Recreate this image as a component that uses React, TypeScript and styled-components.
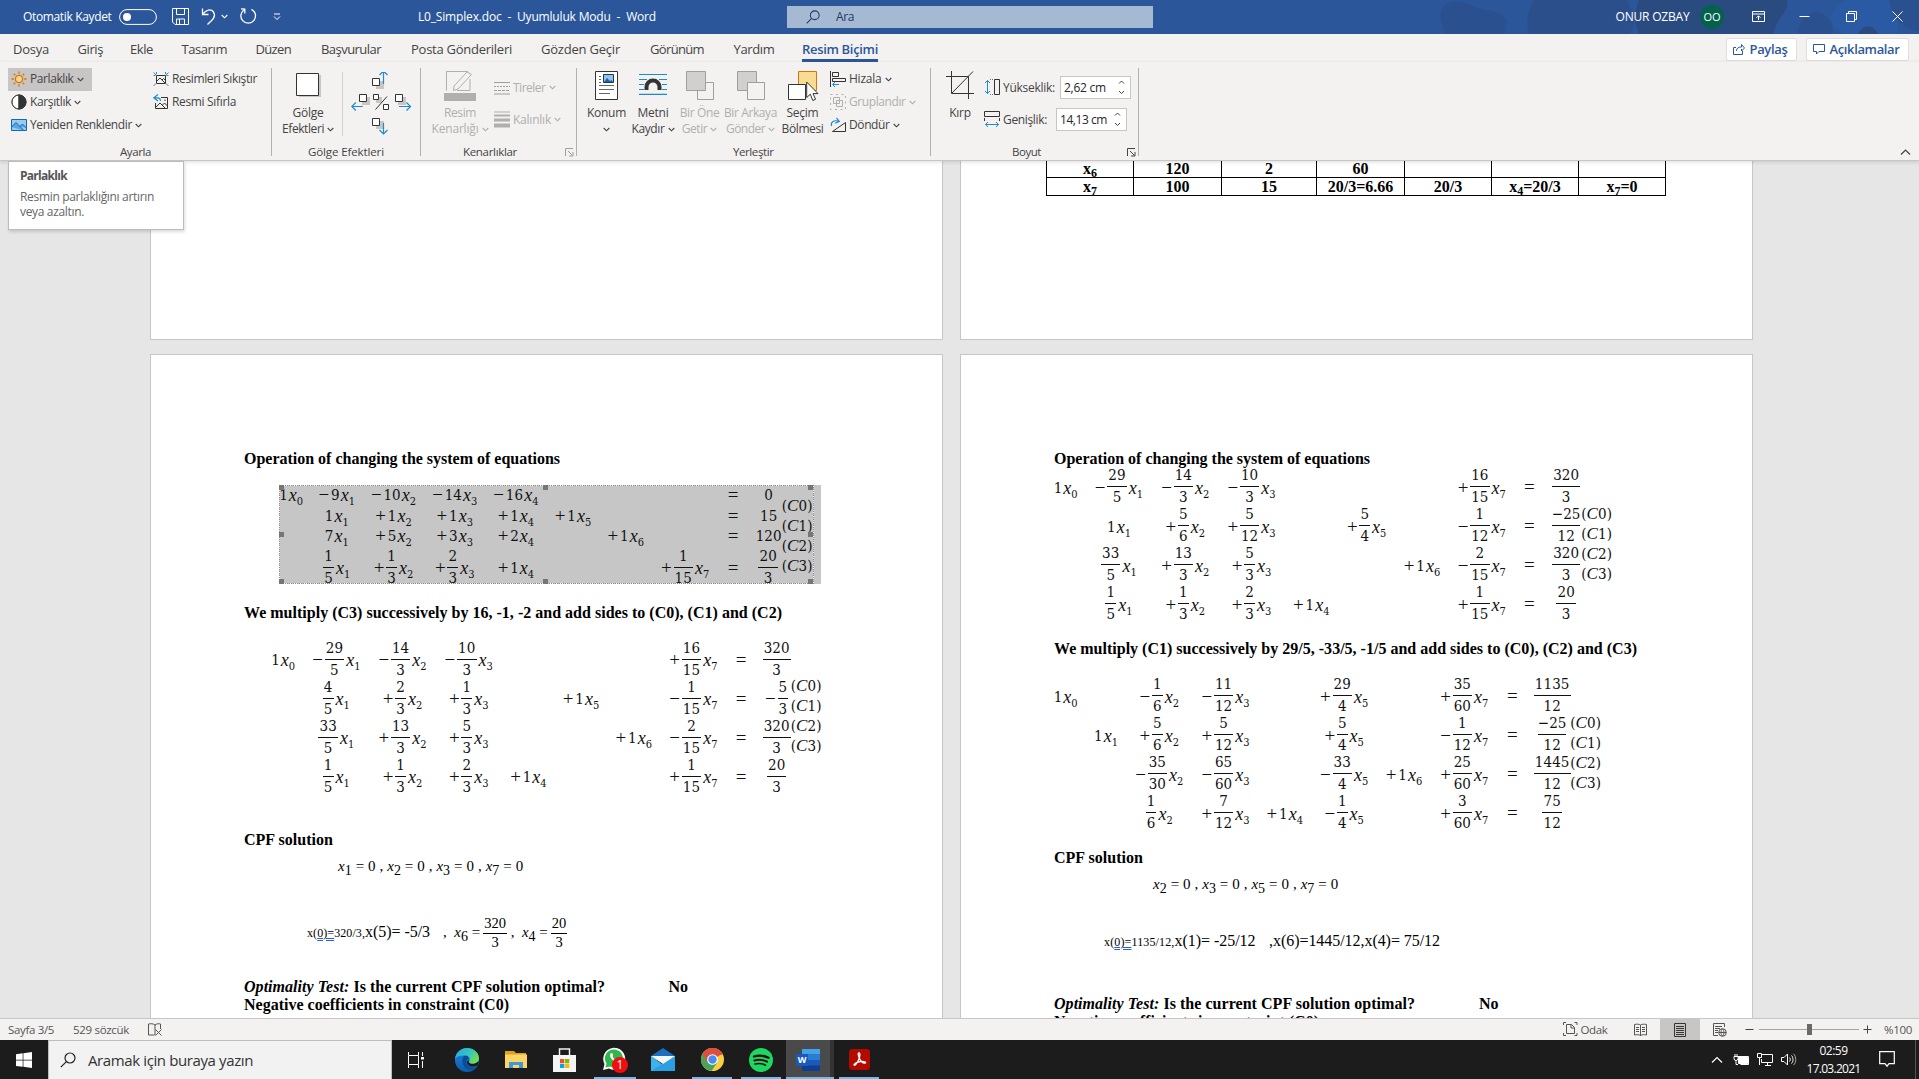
import React, { useLayoutEffect, useRef, useState } from "react";
import styled, { createGlobalStyle, css } from "styled-components";

const Global = createGlobalStyle`
  * { box-sizing: border-box; }
  body { margin: 0; overflow: hidden; background: #e6e6e6; }
  svg { display: block; flex: none; }
`;

/* Turns a list of left edges into the widths of the tracks between them. */
const stops = (...xs: number[]) =>
  xs.slice(1).map((x, i) => `${+(x - xs[i]).toFixed(2)}px`).join(" ");

/* ---------- text ---------- */

const FitBox = styled.span<{ $w: number }>`
  display: inline-block;
  width: ${(p) => p.$w}px;
  white-space: nowrap;
`;

/* A label tracked so that it fills exactly w pixels. */
function Fit({ w, children }: { w: number; children: React.ReactNode }) {
  const ref = useRef<HTMLSpanElement>(null);
  const [tracking, setTracking] = useState(0);
  useLayoutEffect(() => {
    const el = ref.current;
    if (!el) return;
    const count = (el.textContent || "").length;
    setTracking((w - el.getBoundingClientRect().width) / count);
  }, [w]);
  return (
    <FitBox $w={w}>
      <span ref={ref} style={{ letterSpacing: `${tracking}px` }}>{children}</span>
    </FitBox>
  );
}

/* ---------- shell ---------- */

const Window = styled.div`
  width: 1919px;
  height: 1079px;
  display: grid;
  grid-template-rows: 34px 28px 99px 857px 22px 39px;
  overflow: hidden;
  font-family: "Open Sans", "Noto Sans", sans-serif;
  font-size: 12px;
  line-height: 16px;
  color: #444;
`;

const Bar = styled.div<{ $cols: string }>`
  display: grid;
  grid-template-columns: ${(p) => p.$cols};
  align-items: center;
  justify-items: start;
  min-width: 0;
`;

const TitleBar = styled(Bar)`
  position: relative;
  background: #2b579a;
  color: #fff;
  padding-bottom: 1px;
  > * { position: relative; }
`;

const Clouds = styled.svg`
  && { position: absolute; right: 0; top: 0; }
`;

const SearchField = styled.div`
  width: 366px;
  height: 22px;
  background: #a6b9d3;
  color: #1e3a6e;
  display: flex;
  align-items: center;
  padding-left: 19px;
  gap: 16px;
`;

const Avatar = styled.div`
  width: 24px;
  height: 24px;
  border-radius: 50%;
  background: #03624c;
  display: flex;
  align-items: center;
  justify-content: center;
  font-size: 11px;
`;

/* ---------- ribbon ---------- */

const Tabs = styled(Bar)`
  background: #f3f2f1;
  font-size: 13px;
`;

const Tab = styled.div<{ $active?: boolean }>`
  height: 28px;
  padding-top: 7px;
  line-height: 17px;
  ${(p) => p.$active && css`
    color: #2b579a;
    font-weight: 600;
    border-bottom: 3px solid #2b579a;
  `}
`;

const ActionButton = styled.div<{ $w: number }>`
  width: ${(p) => p.$w}px;
  height: 23px;
  margin-bottom: -2px;
  background: #fff;
  border: 1px solid #e1dfdd;
  border-radius: 2px;
  display: flex;
  align-items: center;
  padding-left: 6px;
  gap: 5px;
  color: #2b579a;
  font-weight: 600;
`;

const Ribbon = styled.div`
  background: #f3f2f1;
  border-bottom: 1px solid #c8c6c4;
  display: grid;
  grid-template-columns: ${stops(0, 272, 421, 577, 931, 1139, 1919)};
  position: relative;
  z-index: 2;
  box-shadow: 0 1px 4px rgba(0, 0, 0, 0.14);
`;

const Group = styled.div`
  display: grid;
  grid-template-rows: 82px 16px;
  background: linear-gradient(#b3b0ad, #b3b0ad) right 0 top 6px / 1px 88px no-repeat;
`;

const GroupBody = styled.div<{ $cols: string }>`
  display: grid;
  grid-template-columns: ${(p) => p.$cols};
  align-items: start;
`;

const GroupLabel = styled.div<{ $left: number }>`
  padding-left: ${(p) => p.$left}px;
  padding-right: 3px;
  display: flex;
  justify-content: space-between;
  align-items: center;
  font-size: 11.5px;
`;

const Stack = styled.div<{ $top: number; $gap?: number }>`
  display: flex;
  flex-direction: column;
  align-items: flex-start;
  padding-top: ${(p) => p.$top}px;
  gap: ${(p) => p.$gap ?? 0}px;
`;

const SmallCommand = styled.div<{ $on?: boolean; $off?: boolean }>`
  height: 23px;
  display: flex;
  align-items: center;
  gap: 3px;
  padding: 0 8px 0 3px;
  background: ${(p) => (p.$on ? "#c8c6c4" : "transparent")};
  color: ${(p) => (p.$off ? "#b1afad" : "#444")};
`;

const BigCommand = styled.div<{ $off?: boolean }>`
  display: grid;
  grid-template-rows: 34px 16px 16px;
  padding-top: 9px;
  justify-items: center;
  color: ${(p) => (p.$off ? "#b1afad" : "#444")};
`;

const WithChevron = styled.span`
  display: flex;
  align-items: center;
  gap: 3px;
`;

const Nudges = styled.div`
  border-left: 1px solid #d2d0ce;
  margin-top: 10px;
  height: 64px;
  padding-left: 8px;
`;

const SizeRow = styled.div<{ $field: number }>`
  height: 23px;
  display: grid;
  grid-template-columns: 19.5px ${(p) => p.$field}px auto;
  align-items: center;
`;

const Spin = styled.div`
  width: 71px;
  height: 23px;
  border: 1px solid #c8c6c4;
  background: #fff;
  color: #262626;
  display: flex;
  align-items: center;
  justify-content: space-between;
  padding: 0 5px 0 3px;
`;

const CollapseCorner = styled.div`
  display: flex;
  align-items: flex-end;
  justify-content: flex-end;
  padding: 0 8px 4px 0;
`;

const Tooltip = styled.div`
  position: absolute;
  left: 8px;
  top: 99px;
  width: 176px;
  height: 69px;
  padding: 6px 11px;
  background: #fff;
  border: 1px solid #bebbb8;
  box-shadow: 1px 2px 3px rgba(0, 0, 0, 0.14);
  color: #666;
  line-height: 15px;
  b { display: block; margin-bottom: 6px; color: #555; }
`;

const Pointer = styled.svg`
  position: absolute;
  left: 806px;
  top: 19px;
`;

/* ---------- document ---------- */

const Desk = styled.div`
  background: #e6e6e6;
  display: grid;
  grid-template-columns: 793px 793px;
  column-gap: 17px;
  padding-left: 150px;
  overflow: hidden;
  font-family: "Liberation Serif", serif;
  font-size: 16px;
  line-height: 18px;
  color: #000;
`;

const PageColumn = styled.div`
  display: grid;
  grid-template-rows: 179px 900px;
  row-gap: 14px;
`;

const Page = styled.div<{ $tail?: boolean }>`
  background: #fff;
  border: 1px solid #c6c6c6;
  ${(p) => p.$tail && css`border-top: 0;`}
  padding-left: ${(p) => (p.$tail ? 85 : 93)}px;
`;

const Line = styled.div<{ $mt?: number; $left?: number; $h?: number; $bold?: boolean }>`
  margin-top: ${(p) => p.$mt ?? 0}px;
  padding-left: ${(p) => p.$left ?? 0}px;
  height: ${(p) => p.$h ?? 18}px;
  line-height: ${(p) => p.$h ?? 18}px;
  font-weight: ${(p) => (p.$bold ? 700 : 400)};
  white-space: pre;
  display: flex;
  align-items: center;
`;

const Gap = styled.span<{ $w: number }>`
  width: ${(p) => p.$w}px;
`;

const SmallText = styled.span`
  font-size: 12px;
  position: relative;
  top: 1px;
  u {
    text-decoration: underline double #2b5fd9;
    text-underline-offset: 1px;
    text-decoration-thickness: 1px;
  }
`;

const Table = styled.div`
  width: 620px;
  display: grid;
  grid-template-columns: ${stops(0, 87, 175, 270, 358, 445, 532, 619)};
  grid-template-rows: 17px 18px;
  border-left: 1px solid #000;
  font-weight: 700;
`;

const Cell = styled.div`
  border-right: 1px solid #000;
  border-bottom: 1px solid #000;
  text-align: center;
  line-height: 15px;
  &:nth-child(n + 8) { line-height: 18px; }
  sub { font-size: 12px; line-height: 0; vertical-align: -3px; }
`;

/* ---------- math ---------- */

const Matrix = styled.div<{ $cols: string; $rows: string; $left: number; $mt: number; $gap: number }>`
  margin-top: ${(p) => p.$mt}px;
  margin-left: ${(p) => p.$left}px;
  display: grid;
  grid-template-columns: ${(p) => p.$cols};
  grid-template-rows: ${(p) => p.$rows};
  column-gap: ${(p) => p.$gap}px;
  justify-content: start;
  justify-items: center;
  align-items: center;
  font-family: "DejaVu Serif Condensed", "DejaVu Serif", serif;
  font-stretch: condensed;
  font-size: 15px;
  color: #111;
`;

const Term = styled.span`
  display: flex;
  align-items: center;
  line-height: 16px;
  white-space: nowrap;
`;

const Sign = styled.span`
  width: 12.5px;
  font-family: "Liberation Serif", serif;
  font-size: 19px;
`;

const Digits = styled.span<{ $n: number }>`
  width: ${(p) => p.$n * 8.7}px;
  display: flex;
  justify-content: center;
  letter-spacing: 0.1px;
`;

const Variable = styled.span`
  width: 16px;
  padding-left: 1px;
  font: italic 18px/16px "Liberation Serif", serif;
  sub {
    font: normal 11px/1 "DejaVu Serif Condensed", "DejaVu Serif", serif;
    font-stretch: condensed;
    vertical-align: -4px;
    line-height: 0;
  }
`;

const Fraction = styled.span`
  display: grid;
  grid-template-rows: 14px 1px 14px;
  row-gap: 4px;
  padding: 0 1px 2px;
  margin-right: 1px;
  justify-items: center;
  line-height: 14px;
  &::before {
    content: "";
    grid-row: 2;
    grid-column: 1;
    width: calc(100% + 2px);
    height: 1px;
    background: #111;
  }
  > :first-child { grid-row: 1; }
  > :last-child { grid-row: 3; margin-top: -1px; }
`;

const Labels = styled.div<{ $gap: number; $pitch: number }>`
  grid-column: 11;
  grid-row: 1 / span 4;
  justify-self: start;
  display: flex;
  flex-direction: column;
  margin-top: -5px;
  margin-left: -${(p) => p.$gap}px;
  line-height: ${(p) => p.$pitch}px;
  i { font-family: "Liberation Serif", serif; font-size: 17px; }
`;

const numerals = (s: string) => s.replace("~", "−");

/* Grammar of an entry: [+|-] [n | n/d] [xK]; "~" marks a minus inside a numerator. */
function Entry({ text }: { text: string }) {
  if (text === "") return <span />;
  if (text === "=") return <Sign>=</Sign>;
  const m = /^([+-]?)(~?\d+)?(?:\/(\d+))?(?:x(\d))?$/.exec(text);
  if (!m) return null;
  const [, sign, top, bottom, index] = m;
  return (
    <Term>
      {sign && <Sign>{sign === "-" ? "−" : "+"}</Sign>}
      {bottom ? (
        <Fraction>
          <Digits $n={top.length}>{numerals(top)}</Digits>
          <Digits $n={bottom.length}>{bottom}</Digits>
        </Fraction>
      ) : (
        top && <Digits $n={top.length}>{top}</Digits>
      )}
      {index && <Variable>x<sub>{index}</sub></Variable>}
    </Term>
  );
}

interface SystemProps {
  widths: number[];
  rows: string;
  left: number;
  mt: number;
  gap: number;
  pitch: number;
  lines: string[];
}

function System({ widths, rows, left, mt, gap, pitch, lines }: SystemProps) {
  const cols = [...widths, 31].map((w) => `${w}px`).join(" ");
  return (
    <Matrix $cols={cols} $rows={rows} $left={left} $mt={mt} $gap={gap}>
      {lines.map((line, r) =>
        line.split("|").map((cell, c) => (
          <span key={`${r}-${c}`} style={{ gridRow: r + 1, gridColumn: c + 1 }}>
            <Entry text={cell.trim()} />
          </span>
        ))
      )}
      <Labels $gap={gap} $pitch={pitch}>
        {[0, 1, 2, 3].map((n) => (
          <Fit key={n} w={31}>(<i>C</i>{n})</Fit>
        ))}
      </Labels>
    </Matrix>
  );
}

const Picture = styled.div`
  margin: 17px 0 0 35px;
  width: 542px;
  height: 99px;
  background: #c6c6c6;
  position: relative;
`;

const Outline = styled.div`
  position: absolute;
  inset: 0 7px 0 0;
  border: 1px dashed #fff;
  outline: 1px dotted #8a8a8a;
  outline-offset: -1px;
`;

const Handle = styled.div<{ $x: number; $y: number }>`
  position: absolute;
  left: ${(p) => p.$x}px;
  top: ${(p) => p.$y}px;
  width: 5px;
  height: 5px;
  background: #767676;
`;

const MiniFraction = styled.span`
  display: inline-flex;
  flex-direction: column;
  align-items: center;
  font-size: 14.5px;
  line-height: 17px;
  padding-top: 1px;
  > :first-child { border-bottom: 1px solid #000; padding: 0 1px; line-height: 19px; }
`;

const Mtype = styled.span`
  font-size: 15px;
  i { letter-spacing: 0; }
  sub { font-size: 14px; vertical-align: -4px; line-height: 0; }
`;

function Zeros({ items }: { items: number[] }) {
  return (
    <Mtype>
      <Fit w={186}>
        {items.map((n, i) => (
          <React.Fragment key={n}>
            <i>x</i><sub>{n}</sub> = 0{i < items.length - 1 ? " ,  " : ""}
          </React.Fragment>
        ))}
      </Fit>
    </Mtype>
  );
}

/* ---------- status bar and task bar ---------- */

const StatusBar = styled(Bar)`
  background: #f3f2f1;
  border-top: 1px solid #c6c6c6;
  font-size: 11.5px;
  color: #555;
`;

const ViewButton = styled.div<{ $on?: boolean }>`
  width: 40px;
  height: 21px;
  display: flex;
  align-items: center;
  justify-content: center;
  background: ${(p) => (p.$on ? "#c8c6c4" : "transparent")};
`;

const Slider = styled.div`
  width: 100px;
  height: 11px;
  display: flex;
  justify-content: center;
  background: linear-gradient(#a6a4a2, #a6a4a2) 0 5px / 100% 1px no-repeat;
  &::before { content: ""; width: 5px; background: #6b6967; }
`;

const TaskBar = styled(Bar)`
  background: #1c1c1c;
  color: #fff;
`;

const TaskSearch = styled.div`
  width: 344px;
  height: 39px;
  background: #f2f2f2;
  border: 1px solid #bdbdbd;
  border-bottom: 0;
  padding: 0 0 0 11px;
  display: flex;
  align-items: center;
  gap: 12px;
  font-size: 15px;
  color: #333;
`;

const AppSlot = styled.div<{ $w: number; $running?: boolean; $active?: boolean }>`
  width: ${(p) => p.$w}px;
  height: 39px;
  display: flex;
  align-items: center;
  justify-content: center;
  padding-top: ${(p) => (p.$running ? 2 : 0)}px;
  background: ${(p) => (p.$active ? "#4a4a4a" : "transparent")};
  border-bottom: ${(p) => (p.$running ? "2px solid #76b9ed" : "0")};
`;

const Clock = styled.div`
  width: 54px;
  display: flex;
  flex-direction: column;
  align-items: center;
  line-height: 18px;
`;

/* ---------- icons ---------- */

const G = ({ w, h, children, s = "#444", sw = 1 }: { w: number; h: number; children: React.ReactNode; s?: string; sw?: number }) => (
  <svg width={w} height={h} viewBox={`0 0 ${w} ${h}`} fill="none" stroke={s} strokeWidth={sw}>{children}</svg>
);

const Chevron = ({ c = "#444" }: { c?: string }) => (
  <G w={7} h={5} s={c} sw={1.1}><path d="M.7 1 3.5 3.8 6.3 1" /></G>
);

const Launcher = ({ c }: { c: string }) => (
  <G w={9} h={9} s={c}><path d="M.5 8V.5H8M3 3l4.5 4.5M8 4v4H4" /></G>
);

const Magnifier = ({ c, size }: { c: string; size: number }) => (
  <svg width={size} height={size} viewBox="0 0 16 16" fill="none" stroke={c} strokeWidth="1.2">
    <circle cx="10" cy="6" r="5" /><path d="M6.4 9.6.8 15.2" />
  </svg>
);

const NudgeIcons = () => (
  <G w={62} h={64}>
    <g fill="#c8c6c4" stroke="none">
      <path d="M25 9h8v8h-8zM11 25h8v8h-8zM47 25h8v8h-8zM25 49h8v8h-8zM25 25h6v6h-6z" />
    </g>
    <g fill="#fff" stroke="#333">
      <path d="M21.5 6.5h7v7h-7zM8.500 22.500h7v7h-7zM44.500 22.500h7v7h-7zM21.500 46.500h7v7h-7zM22.500 22.500h5v5h-5zM32.500 32.500h5v5h-5z" />
      <path d="M36 24.500 24.500 37.500" />
    </g>
    <g stroke="#1e8bcd" strokeWidth="1.2">
      <path d="M32.500 12V-1M28.500 3l4-4 4 4" />
      <path d="M11 34.500H-.5M4 30.500l-4 4 4 4" transform="translate(.8 0)" />
      <path d="M48 34.500h11M55.500 30.500l4 4-4 4" />
      <path d="M32.500 51v11M28.500 58l4 4 4-4" />
    </g>
  </G>
);

const Sun = () => (
  <G w={16} h={16} s="#d9730d" sw={1.3}>
    <circle cx="8" cy="8" r="3.600" fill="#fbd58a" />
    <path d="M8 .5v2.300M8 13.200v2.300M.5 8h2.300M13.200 8h2.300M2.700 2.700l1.600 1.600M11.700 11.700l1.600 1.600M13.300 2.700l-1.600 1.600M4.300 11.700l-1.600 1.600" />
  </G>
);

const Contrast = () => (
  <G w={16} h={16} s="#333"><circle cx="8" cy="8" r="7" fill="#fff" /><path d="M8 1a7 7 0 0 0 0 14z" fill="#fff" /><path d="M8 1a7 7 0 0 1 0 14z" fill="#333" /></G>
);

const Recolor = () => (
  <G w={16} h={16} s="#1468b3">
    <path d="M.5 2.500h15v11H.5z" fill="#9bcbf3" />
    <path d="M.5 10 5 5.500l8 8M9 9.500 11.500 7l4 4" fill="#5aa6e0" />
  </G>
);

const Compress = () => (
  <G w={16} h={16} s="#333">
    <path d="M3.500 4.500h9v8h-9zM4 10l3-3 5 5M9 9l1.500-1.500L12 9" />
    <path d="M.5 1.500 3 4M15.500 1.500 13 4M.5 15 3 12.500M15.500 15 13 12.500M.5 4.500h2M13.500 4.500h2M3.500 1v2M12.500 1v2" stroke="#1e8bcd" />
  </G>
);

const ResetPicture = () => (
  <G w={16} h={16} s="#333">
    <path d="M8 3.500h6.500v11h-12V9M3 13l4-4 5 5M9.500 11 11.500 9l3 3M12 5.500v1.500" />
    <path d="M5 .5.800 3.800 5 7M1 3.800h3.500c2 0 3 1.200 3 3.200" stroke="#1e8bcd" strokeWidth="1.200" />
  </G>
);

const PositionIcon = () => (
  <G w={23} h={29} s="#333">
    <path d="M.5.500h22v28H.5z" fill="#fff" />
    <path d="M4 5.500h2M4 8.500h2M4 11.500h2M4 14.500h15M4 18.500h15M4 22.500h11" stroke="#666" />
    <path d="M8.500 3.500h10v8h-10z" fill="#8cc4f2" /><path d="m9 11 3-4 3 3 1.500-1L18 11z" fill="#1468b3" stroke="none" />
  </G>
);

const WrapIcon = () => (
  <G w={28} h={24} s="#1e8bcd" sw={1.2}>
    <path d="M0 3.500h28M0 8.500h8M20 8.500h8M0 13.500h5M23 13.500h5M0 18.500h5M23 18.500h5M0 23.300h28" />
    <path d="M7.500 19v-3a6.500 6.500 0 0 1 13 0v3" stroke="#333" strokeWidth="4" />
  </G>
);

const Forward = () => (
  <G w={28} h={29} s="#a19f9d"><path d="M11.500 11.500h16v17h-16z" fill="#f3f2f1" /><path d="M.5.500h19v19H.5z" fill="#d2d0ce" /></G>
);
const Backward = () => (
  <G w={28} h={29} s="#a19f9d"><path d="M.5.500h19v19H.5z" fill="#d2d0ce" /><path d="M10.500 11.500h17v17h-17z" fill="#f3f2f1" /></G>
);
const SelectionIcon = () => (
  <G w={29} h={29} s="#333"><path d="M10.500.500h18v19h-18z" fill="#f9dc93" stroke="#d9730d" /><path d="M.5 13.500h17v15H.5z" fill="#fff" /></G>
);

const AlignIcon = () => (
  <G w={16} h={16} s="#333"><path d="M.5 0v16M2.500 1.500h6v4h-6zM2.500 7.500h13v3h-13z" /><path d="M9 13.500H3M5 11l-2.500 2.500L5 16" stroke="#1e8bcd" /></G>
);
const GroupIcon = () => (
  <G w={16} h={16} s="#b1afad"><path d="M3.500 3.500h6v6h-6zM6.500 6.500h6v6h-6z" /><path d="M.5.500h15v15H.5z" strokeDasharray="2 3.500" /></G>
);
const RotateIcon = () => (
  <G w={16} h={16} s="#333"><path d="M2.500 14.500h13v-9z" /><path d="M1.500 9C.5 5 4 2.500 9 4.500M6.500.800 9.300 4.600 5 6.300" stroke="#1e8bcd" strokeWidth="1.200" /></G>
);
const CropIcon = () => (
  <G w={28} h={28} s="#333"><path d="M0 5.500h22.500V28M5.500 0v22.500H28M6 22 27 .5" /></G>
);
const HeightIcon = () => (
  <G w={16} h={17} s="#333"><path d="M10.500.500h5v15h-5z" /><path d="M6 .5h3M6 15.500h3" stroke="#1e8bcd" strokeDasharray="1 1" /><path d="M3.500 1.500v13M1 4l2.500-2.500L6 4M1 12l2.500 2.500L6 12" stroke="#1e8bcd" /></G>
);
const WidthIcon = () => (
  <G w={16} h={17} s="#333"><path d="M.5.500h15v5H.5zM.5 7v3M15.500 7v3" /><path d="M1.500 13.500h13M4 11l-2.500 2.500L4 16M12 11l2.500 2.500L12 16" stroke="#1e8bcd" /></G>
);
const OutlineIcon = () => (
  <G w={32} h={30} s="#b1afad">
    <path d="M2.500 19.500V.500H24M26 8v11.500H13" />
    <path d="m10 15 13-14 4.500 2.500L14 18l-4.500 1.500z" fill="#f3f2f1" />
    <path d="M0 22h32v8H0z" fill="#b1afad" stroke="none" />
  </G>
);
const DashIcon = () => (
  <G w={16} h={14} s="#a19f9d"><path d="M0 1.500h16" /><path d="M0 5.500h16" strokeDasharray="2 1" /><path d="M0 9.500h16" strokeDasharray="3 1" /><path d="M0 13h16" /></G>
);
const WeightIcon = () => (
  <G w={16} h={17} s="#b1afad"><path d="M0 1h16" /><path d="M0 4.500h16" strokeWidth="2" /><path d="M0 9h16" strokeWidth="3" /><path d="M0 14.500h16" strokeWidth="4" /></G>
);

/* ---------- data ---------- */

const TABS: [number, number, string][] = [
  [13, 36, "Dosya"], [77.5, 25.5, "Giriş"], [130, 23, "Ekle"], [181.5, 45.5, "Tasarım"], [255.5, 35.5, "Düzen"],
  [321, 60, "Başvurular"], [411, 101, "Posta Gönderileri"], [541, 79, "Gözden Geçir"], [650, 54, "Görünüm"], [733.5, 41, "Yardım"],
];

const SYS1 = [
  "1x0|-9x1|-10x2|-14x3|-16x4||||=|0",
  "|1x1|+1x2|+1x3|+1x4|+1x5|||=|15",
  "|7x1|+5x2|+3x3|+2x4||+1x6||=|120",
  "|1/5x1|+1/3x2|+2/3x3|+1x4|||+1/15x7|=|20/3",
];
const SYS2 = [
  "1x0|-29/5x1|-14/3x2|-10/3x3||||+16/15x7|=|320/3",
  "|4/5x1|+2/3x2|+1/3x3||+1x5||-1/15x7|=|-5/3",
  "|33/5x1|+13/3x2|+5/3x3|||+1x6|-2/15x7|=|320/3",
  "|1/5x1|+1/3x2|+2/3x3|+1x4|||+1/15x7|=|20/3",
];
const SYS3 = [
  "1x0|-29/5x1|-14/3x2|-10/3x3||||+16/15x7|=|320/3",
  "|1x1|+5/6x2|+5/12x3||+5/4x5||-1/12x7|=|~25/12",
  "|33/5x1|+13/3x2|+5/3x3|||+1x6|-2/15x7|=|320/3",
  "|1/5x1|+1/3x2|+2/3x3|+1x4|||+1/15x7|=|20/3",
];
const SYS4 = [
  "1x0||-1/6x2|-11/12x3||+29/4x5||+35/60x7|=|1135/12",
  "|1x1|+5/6x2|+5/12x3||+5/4x5||-1/12x7|=|~25/12",
  "||-35/30x2|-65/60x3||-33/4x5|+1x6|+25/60x7|=|1445/12",
  "||1/6x2|+7/12x3|+1x4|-1/4x5||+3/60x7|=|75/12",
];
const FOUR = "39px 39px 39px 39px";

/* ---------- sections ---------- */

function Title() {
  return (
    <TitleBar $cols={stops(0, 23, 119, 172, 201, 221, 239, 273, 418, 787, 1615.5, 1700, 1752, 1799, 1846, 1892, 1919)}>
      <Clouds width="520" height="34" viewBox="0 0 520 34">
        <path d="M42 20C38 4 52-2 70 4c12 8 30 4 38 16l-2 14H46z" fill="#2a5090" />
        <path d="M129 34c-2-14 0-24 6-34h92c10 14 10 24 4 34z" fill="#2a4f8b" />
        <path d="M240 34c-6-12-4-24 0-34h148c2 12-8 14-14 34z" fill="#2a4b80" />
        <path d="M398 34c2-14 12-24 22-22 8 4 14 8 14 22z" fill="#2a5090" />
        <path d="M432 16c4-10 12-16 22-16h38c8 10 8 22 6 34h-52c-10-4-14-10-14-18z" fill="#2a5aa4" />
        <path d="M459 34c4-10 16-10 20 0z" fill="#2a4b80" />
        <path d="M490 0h30v32c-18-4-28-16-30-32z" fill="#2a5090" />
      </Clouds>
      <span />
      <Fit w={88.5}>Otomatik Kaydet</Fit>
      <G w={38} h={16} s="#fff"><rect x=".6" y=".6" width="36.800" height="14.800" rx="7.400" /><circle cx="8" cy="8" r="4" fill="#fff" stroke="none" /></G>
      <G w={17} h={17} s="#fff"><path d="M.5.500h16v16H3l-2.500-2.500zM4.500.500v6h8v-6M4.500 16v-5h8v5M7.500 11v5" /></G>
      <G w={16} h={17} s="#fff" sw={1.3}><path d="M1.500.500v6h6M1.800 6.200C5 1.500 10 .5 12.500 4c3 4.500-1 8-6 12.500" /></G>
      <Chevron c="#fff" />
      <G w={18} h={18} s="#fff" sw={1.3}><path d="M2 .800 5.800 1v4.500M5.500 1.500a7.300 7.300 0 1 0 7-.2" /></G>
      <G w={8} h={8} s="#fff"><path d="M1 1h6M1 3.500l3 3 3-3" /></G>
      <Fit w={238}>L0_Simplex.doc&nbsp; -&nbsp; Uyumluluk Modu&nbsp; -&nbsp; Word</Fit>
      <SearchField><Magnifier c="#1e3a6e" size={14} /><Fit w={18}>Ara</Fit></SearchField>
      <Fit w={74}>ONUR OZBAY</Fit>
      <Avatar>OO</Avatar>
      <G w={13} h={11} s="#fff"><path d="M.5.500h12v10H.5zM.5 3h12M6.500 9V5M4.500 6.800l2-2 2 2" /></G>
      <G w={11} h={3} s="#fff"><path d="M.5 1.500h10" /></G>
      <G w={11} h={11} s="#fff"><path d="M.5 2.500h8v8h-8zM2.500 2.500v-2h8v8h-2" /></G>
      <G w={11} h={11} s="#fff"><path d="m.5.500 10 10M10.500.500l-10 10" /></G>
    </TitleBar>
  );
}

function TabStrip() {
  return (
    <Tabs $cols={stops(0, ...TABS.map((t) => t[0]), 802, 1725.5, 1805.5, 1919)}>
      <span />
      {TABS.map(([x, w, label]) => (
        <Tab key={x}><Fit w={w}>{label}</Fit></Tab>
      ))}
      <Tab $active><Fit w={76}>Resim Biçimi</Fit></Tab>
      <ActionButton $w={71}>
        <G w={12} h={12} s="#2b579a"><path d="M3 4.500H.500v7h9V8M3.500 8c0-3 2-4 5-4V1.500L11.500 5 8.500 8V6" /></G>
        <Fit w={38}>Paylaş</Fit>
      </ActionButton>
      <ActionButton $w={103}>
        <G w={12} h={11} s="#2b579a"><path d="M.500.500h11v7H6L3.500 10V7.500h-3z" /></G>
        <Fit w={70}>Açıklamalar</Fit>
      </ActionButton>
    </Tabs>
  );
}

const OFF = "#b1afad";

function RibbonPanel() {
  return (
    <Ribbon>
      <Group>
        <GroupBody $cols="8px 142px auto">
          <span />
          <Stack $top={5.5}>
            <SmallCommand $on><Sun /><Fit w={43.5}>Parlaklık</Fit><Chevron /></SmallCommand>
            <SmallCommand><Contrast /><Fit w={41}>Karşıtlık</Fit><Chevron /></SmallCommand>
            <SmallCommand><Recolor /><Fit w={102}>Yeniden Renklendir</Fit><Chevron /></SmallCommand>
          </Stack>
          <Stack $top={5.5}>
            <SmallCommand><Compress /><Fit w={85}>Resimleri Sıkıştır</Fit></SmallCommand>
            <SmallCommand><ResetPicture /><Fit w={64}>Resmi Sıfırla</Fit></SmallCommand>
          </Stack>
        </GroupBody>
        <GroupLabel $left={120}><Fit w={31}>Ayarla</Fit></GroupLabel>
      </Group>

      <Group>
        <GroupBody $cols={stops(272, 280, 342, 421)}>
          <span />
          <BigCommand style={{ width: 56 }}>
            <G w={26} h={28} s="#333"><path d="M4 4h22v22H4z" fill="#c8c6c4" stroke="none" /><path d="M1.500 2.500h22v22h-22z" fill="#fff" /></G>
            <Fit w={31}>Gölge</Fit>
            <WithChevron><Fit w={42}>Efektleri</Fit><Chevron /></WithChevron>
          </BigCommand>
          <Nudges><NudgeIcons /></Nudges>
        </GroupBody>
        <GroupLabel $left={36}><Fit w={76}>Gölge Efektleri</Fit></GroupLabel>
      </Group>

      <Group>
        <GroupBody $cols={stops(421, 429, 491, 577)}>
          <span />
          <BigCommand $off>
            <OutlineIcon />
            <Fit w={32}>Resim</Fit>
            <WithChevron><Fit w={47}>Kenarlığı</Fit><Chevron c={OFF} /></WithChevron>
          </BigCommand>
          <Stack $top={14} $gap={9}>
            <SmallCommand $off><DashIcon /><Fit w={32.5}>Tireler</Fit><Chevron c={OFF} /></SmallCommand>
            <SmallCommand $off><WeightIcon /><Fit w={38}>Kalınlık</Fit><Chevron c={OFF} /></SmallCommand>
          </Stack>
        </GroupBody>
        <GroupLabel $left={42}><Fit w={54}>Kenarlıklar</Fit><Launcher c="#a19f9d" /></GroupLabel>
      </Group>

      <Group>
        <GroupBody $cols={stops(577, 583, 630, 676, 723, 778, 827, 931)}>
          <span />
          <BigCommand><PositionIcon /><Fit w={39}>Konum</Fit><WithChevron><Chevron /></WithChevron></BigCommand>
          <BigCommand><WrapIcon /><Fit w={31}>Metni</Fit><WithChevron><Fit w={33}>Kaydır</Fit><Chevron /></WithChevron></BigCommand>
          <BigCommand $off><Forward /><Fit w={39.5}>Bir Öne</Fit><WithChevron><Fit w={25.5}>Getir</Fit><Chevron c={OFF} /></WithChevron></BigCommand>
          <BigCommand $off><Backward /><Fit w={53}>Bir Arkaya</Fit><WithChevron><Fit w={39}>Gönder</Fit><Chevron c={OFF} /></WithChevron></BigCommand>
          <BigCommand><SelectionIcon /><Fit w={32}>Seçim</Fit><Fit w={42}>Bölmesi</Fit></BigCommand>
          <Stack $top={5.5}>
            <SmallCommand><AlignIcon /><Fit w={32.5}>Hizala</Fit><Chevron /></SmallCommand>
            <SmallCommand $off><GroupIcon /><Fit w={56.5}>Gruplandır</Fit><Chevron c={OFF} /></SmallCommand>
            <SmallCommand><RotateIcon /><Fit w={40.5}>Döndür</Fit><Chevron /></SmallCommand>
          </Stack>
        </GroupBody>
        <GroupLabel $left={156}><Fit w={40.5}>Yerleştir</Fit></GroupLabel>
      </Group>

      <Group>
        <GroupBody $cols={stops(931, 940, 983.5, 1139)}>
          <span />
          <BigCommand style={{ width: 40 }}><CropIcon /><Fit w={21.5}>Kırp</Fit></BigCommand>
          <Stack $top={14} $gap={9}>
            <SizeRow $field={57}>
              <HeightIcon /><Fit w={52}>Yükseklik:</Fit>
              <Spin><Fit w={42}>2,62 cm</Fit><G w={7} h={15}><path d="M1 3.500 3.500 1 6 3.500M1 11l2.500 2.500L6 11" /></G></Spin>
            </SizeRow>
            <SizeRow $field={53}>
              <WidthIcon /><Fit w={44}>Genişlik:</Fit>
              <Spin><Fit w={47}>14,13 cm</Fit><G w={7} h={15}><path d="M1 3.500 3.500 1 6 3.500M1 11l2.500 2.500L6 11" /></G></Spin>
            </SizeRow>
          </Stack>
        </GroupBody>
        <GroupLabel $left={81}><Fit w={29}>Boyut</Fit><Launcher c="#444" /></GroupLabel>
      </Group>

      <CollapseCorner><G w={11} h={7} sw={1.2}><path d="m1 5.500 4.500-4.500L10 5.500" /></G></CollapseCorner>

      <Pointer width="13" height="21" viewBox="0 0 13 21"><path d="M.7 1v15.500l3.600-3.300L6.800 19.500l2.800-1.200-2.600-5.700h5z" fill="#fff" stroke="#333" /></Pointer>

      <Tooltip>
        <b><Fit w={47}>Parlaklık</Fit></b>
        <Fit w={134}>Resmin parlaklığını artırın</Fit>
        <Fit w={64}>veya azaltın.</Fit>
      </Tooltip>
    </Ribbon>
  );
}

function LeftPage() {
  return (
    <Page>
      <Line $mt={95} $bold><Fit w={316}>Operation of changing the system of equations</Fit></Line>
      <Picture>
        <System
          widths={[22, 35, 44, 44, 44, 36, 35, 49.5, 11, 26]} rows="20px 22px 18px 46px"
          left={1.5} mt={0} gap={17.2} pitch={20} lines={SYS1}
        />
        <Outline />
        {[0, 264, 529].map((x) => [0, 47, 94].map((y) => (x === 264 && y === 47 ? null : <Handle key={`${x}${y}`} $x={x} $y={y} />)))}
      </Picture>
      <Line $mt={20} $bold><Fit w={538}>We multiply (C3) successively by 16, -1, -2 and add sides to (C0), (C1) and (C2)</Fit></Line>
      <System widths={[23, 49, 49, 49, 36, 35, 36, 49, 11, 27]} rows={FOUR} left={28} mt={18.5} gap={17.2} pitch={20} lines={SYS2} />
      <Line $mt={34.5} $bold><Fit w={89}>CPF solution</Fit></Line>
      <Line $mt={7} $h={20} $left={94}><Zeros items={[1, 2, 3, 7]} /></Line>
      <Line $mt={41} $h={30} $left={63}>
        <SmallText><Fit w={58}>x(<u>0)=</u>320/3,</Fit></SmallText><Fit w={65}>x(5)= -5/3</Fit>
        <Gap $w={13} />
        <Mtype>,&nbsp; <i>x</i><sub>6</sub> =</Mtype><Gap $w={3} />
        <MiniFraction><span>320</span><span>3</span></MiniFraction>
        <Mtype> ,&nbsp; <i>x</i><sub>4</sub> =</Mtype><Gap $w={3} />
        <MiniFraction><span>20</span><span>3</span></MiniFraction>
      </Line>
      <Line $mt={31} $bold><Fit w={361}><i>Optimality Test:</i> Is the current CPF solution optimal?</Fit><Gap $w={63.5} />No</Line>
      <Line $bold><Fit w={265}>Negative coefficients in constraint (C0)</Fit></Line>
    </Page>
  );
}

function RightPage() {
  return (
    <Page>
      <Line $mt={95} $bold><Fit w={316}>Operation of changing the system of equations</Fit></Line>
      <System widths={[23, 49, 49, 49, 36, 40, 36, 49, 11, 29]} rows={FOUR} left={0.5} mt={0} gap={17.3} pitch={20} lines={SYS3} />
      <Line $mt={16} $bold><Fit w={583}>We multiply (C1) successively by 29/5, -33/5, -1/5 and add sides to (C0), (C2) and (C3)</Fit></Line>
      <System widths={[23, 23, 49, 49, 35, 49, 36, 50, 11, 35]} rows={FOUR} left={0.5} mt={19} gap={17.3} pitch={20} lines={SYS4} />
      <Line $mt={16} $bold><Fit w={89}>CPF solution</Fit></Line>
      <Line $mt={7} $h={20} $left={99}><Zeros items={[2, 3, 5, 7]} /></Line>
      <Line $mt={37} $h={20} $left={50}>
        <SmallText><Fit w={70.5}>x(<u>0)=</u>1135/12,</Fit></SmallText><Fit w={81}>x(1)= -25/12</Fit>
        <Gap $w={13.5} /><Fit w={171}>,x(6)=1445/12,x(4)= 75/12</Fit>
      </Line>
      <Line $mt={43.5} $bold><Fit w={361}><i>Optimality Test:</i> Is the current CPF solution optimal?</Fit><Gap $w={64} />No</Line>
      <Line $bold><Fit w={265}>Negative coefficients in constraint (C0)</Fit></Line>
    </Page>
  );
}

function Document() {
  return (
    <Desk>
      <PageColumn><Page $tail /><LeftPage /></PageColumn>
      <PageColumn>
        <Page $tail>
          <Table>
            <Cell>x<sub>6</sub></Cell><Cell>120</Cell><Cell>2</Cell><Cell>60</Cell><Cell /><Cell /><Cell />
            <Cell>x<sub>7</sub></Cell><Cell>100</Cell><Cell>15</Cell><Cell>20/3=6.66</Cell><Cell>20/3</Cell>
            <Cell>x<sub>4</sub>=20/3</Cell><Cell>x<sub>7</sub>=0</Cell>
          </Table>
        </Page>
        <RightPage />
      </PageColumn>
    </Desk>
  );
}

function Status() {
  return (
    <StatusBar $cols={stops(0, 8, 73, 148, 1563, 1580.5, 1620, 1660, 1700, 1745, 1759, 1863, 1884, 1919)}>
      <span />
      <Fit w={46}>Sayfa 3/5</Fit>
      <Fit w={56}>529 sözcük</Fit>
      <G w={15} h={14} s="#555"><path d="M7 1.500V12M7 2C5 .5 3 .5.500 1v11h6M7 2c2-1.500 4-1.500 5.500-1v5M7.500 6.500l6 6M13.500 6.500l-6 6" /></G>
      <G w={15} h={15} s="#555"><path d="M3 .500H.500V3M11.500.500H14V3M3 13.500H.500V11M11.500 13.500H14V11M3.500 2.500h5l3 3v6h-8zM8 2.500V6h3.500" /></G>
      <Fit w={27}>Odak</Fit>
      <ViewButton><G w={13} h={14} s="#555"><path d="M6.500 2C5 1 3 1 .500 1.500v10.500c2.500-.5 4.500-.5 6 .5 1.500-1 3.500-1 6-.5V1.500C10 1 8 1 6.500 2zv11M2 4.500h3M2 6.500h3M2 8.500h3M8 4.500h3M8 6.500h3M8 8.500h3" /></G></ViewButton>
      <ViewButton $on><G w={12} h={14} s="#333"><path d="M.500.500h11v13H.500zM2 3.500h8M2 5.500h8M2 7.500h8M2 9.500h8M2 11.500h8" /></G></ViewButton>
      <ViewButton><G w={14} h={14} s="#555"><path d="M11.500 4V.500H.500v12H5M2 3.500h7M2 5.500h5M2 7.500h3M2 9.500h3" /><circle cx="9.500" cy="9.500" r="3.800" /><path d="M5.700 9.500h7.600M9.500 5.700c-2 2-2 5.600 0 7.600 2-2 2-5.600 0-7.600" /></G></ViewButton>
      <G w={9} h={9} s="#444"><path d="M.500 4.500h8" /></G>
      <Slider />
      <G w={9} h={9} s="#444"><path d="M.500 4.500h8M4.500.500v8" /></G>
      <Fit w={28}>%100</Fit>
    </StatusBar>
  );
}

function Tasks() {
  return (
    <TaskBar $cols={stops(0, 16, 48, 408, 444, 493, 541, 594, 651, 692, 741, 786, 830, 839, 1711, 1733, 1757, 1781, 1806.5, 1879, 1915, 1919)}>
      <span />
      <svg width="16" height="16" viewBox="0 0 16 16" fill="#fff"><path d="M0 2.200 6.700 1.300v6.400H0zM7.400 1.200 16 0v7.700H7.400zM0 8.400h6.700v6.400L0 13.900zM7.400 8.400H16V16l-8.600-1.200z" /></svg>
      <TaskSearch><Magnifier c="#222" size={16} /><Fit w={165}>Aramak için buraya yazın</Fit></TaskSearch>
      <G w={17} h={16} s="#fff"><path d="M.500 0v3M10.500 0v3M.500 3.500h10M.500 13v3M10.500 13v3M.500 12.500h10M.500 3.500v9M10.500 3.500v9M14.500 0v4M14.500 9v7" /><path d="M13 5h3v2.500h-3z" fill="#fff" stroke="none" /></G>

      <AppSlot $w={46}>
        <svg width="24" height="24" viewBox="0 0 24 24">
          <defs>
            <linearGradient id="ea" x1="0" y1="0" x2="1" y2=".5"><stop offset="0" stopColor="#2aa7e8" /><stop offset=".6" stopColor="#35c4c0" /><stop offset="1" stopColor="#6fdc5a" /></linearGradient>
            <linearGradient id="eb" x1="0" y1="0" x2="0" y2="1"><stop offset="0" stopColor="#1b86d9" /><stop offset="1" stopColor="#0d5cb0" /></linearGradient>
          </defs>
          <circle cx="12" cy="12" r="12" fill="url(#eb)" />
          <path d="M0 11C1 4 6 0 12 0c7 0 12 5 12 10 0 4-3 6-6 6-3.500 0-4.500-1.500-4-2.500 1.500-1.500 1-5.500-3-6C6 7 1.500 8 0 11z" fill="url(#ea)" />
          <path d="M9 8c-3 4-2 10 3 13 4 2 8 0 10-2.500-3 2-9 1.500-10.500-3C11 13 12 11 14 10c-1-2-3-2.500-5-2z" fill="#0b4c94" />
          <path d="M22.500 17.500c-3 1.700-8 1.500-10-1.500-.8-1.500-.5-3 .8-4 .6 1 0 2 1.200 3 2 1.600 6 1 9-2-.2 1.600-.4 3-1 4.500z" fill="#1c1c1c" />
        </svg>
      </AppSlot>
      <AppSlot $w={46}>
        <svg width="22" height="19" viewBox="0 0 22 19"><path d="M0 1h9l2 2h10v15H0z" fill="#e0a21b" /><path d="M0 4.500h22V18H0z" fill="#fbd667" /><path d="M4 18v-6h14v6h-4v-3H8v3z" fill="#3f97dd" /></svg>
      </AppSlot>
      <AppSlot $w={46}>
        <svg width="23" height="24" viewBox="0 0 23 24"><path d="M6.500 8V1h10v7" fill="none" stroke="#f0f0f0" strokeWidth="1.500" /><path d="M0 7h23v17H0z" fill="#f4f4f4" /><path d="M7 11h4.300v4.300H7z" fill="#f25022" /><path d="M12 11h4.300v4.300H12z" fill="#7fba00" /><path d="M7 16h4.300v4H7z" fill="#00a4ef" /><path d="M12 16h4.300v4H12z" fill="#ffb900" /></svg>
      </AppSlot>
      <AppSlot $w={42} $running>
        <svg width="26" height="26" viewBox="0 0 26 26">
          <path d="M1 23 2.500 17A11 11 0 1 1 7 21.500z" fill="#fff" /><path d="M3.500 20.500 4.500 16.500A9 9 0 1 1 8 19.500z" fill="#2fb84a" />
          <path d="M8.500 6.500c1-1 2-.5 2.500 1s-.8 1.500 0 2.800 2 2.200 3 2.500 1-1.500 2.500-1 2 1 1 2.200-3 1.500-5.500 0S7 9.500 8.500 6.500z" fill="#fff" />
          <circle cx="18" cy="18" r="8" fill="#f00f0f" />
          <text x="18" y="22.300" textAnchor="middle" fontFamily="Open Sans, sans-serif" fontSize="12" fill="#fff">1</text>
        </svg>
      </AppSlot>
      <AppSlot $w={24}>
        <svg width="24" height="23" viewBox="0 0 24 23"><path d="M0 8 12 0l12 8v4H0z" fill="#1a6fc0" /><path d="M0 8l12 9L24 8v15H0z" fill="#3bb4ee" /><path d="M0 23 24 8v15z" fill="#2aa0e0" /><path d="M0 8h24l-12 8z" fill="#f5f5f5" /></svg>
      </AppSlot>
      <AppSlot $w={40} $running>
        <svg width="23" height="23" viewBox="0 0 24 24"><circle cx="12" cy="12" r="12" fill="#f8cf45" /><path d="M12 12 1.600 6A12 12 0 0 1 22.400 6z" fill="#d9503f" /><path d="M12 12 1.600 6A12 12 0 0 0 11 24l6-9z" fill="#4ba35a" /><path d="M1.600 6l5 8.500L12 7h10.800A12 12 0 0 0 1.600 6z" fill="#d9503f" /><circle cx="12" cy="12" r="5.600" fill="#fff" /><circle cx="12" cy="12" r="4.400" fill="#4c8bf5" /></svg>
      </AppSlot>
      <AppSlot $w={40} $running>
        <svg width="24" height="24" viewBox="0 0 24 24"><circle cx="12" cy="12" r="12" fill="#1ed760" /><g fill="none" stroke="#111" strokeLinecap="round"><path d="M5 8.500c5-1.500 10-1 14.500 1.300" strokeWidth="2.300" /><path d="M5.500 12.500c4.500-1.300 8.500-.8 12.500 1.200" strokeWidth="2" /><path d="M6 16c4-1 7.300-.5 10.500 1.200" strokeWidth="1.600" /></g></svg>
      </AppSlot>
      <AppSlot $w={44} $running $active>
        <svg width="24" height="22" viewBox="0 0 24 22"><path d="M6 0h18v5.500H6z" fill="#41a5ee" /><path d="M6 5.500h18V11H6z" fill="#2b7cd3" /><path d="M6 11h18v5.500H6z" fill="#185abd" /><path d="M6 16.500h18V22H6z" fill="#103f91" /><path d="M0 5h12v12H0z" fill="#185abd" /><text x="6" y="14.300" textAnchor="middle" fontFamily="Open Sans, sans-serif" fontWeight="700" fontSize="9" fill="#fff">W</text></svg>
      </AppSlot>
      <AppSlot $w={4} $running style={{ background: "#333" }} />
      <AppSlot $w={40} $running>
        <svg width="21" height="21" viewBox="0 0 21 21"><rect width="21" height="21" rx="3.500" fill="#b30b00" /><path d="M10 4c-1.500 0-.5 3 .5 5.500 1.200 2.500 3.500 5 5.500 4.500s-1-2-4.500-1.500S4.500 15 5 16s3-1.500 4.500-5S11.500 4 10 4z" fill="none" stroke="#fff" strokeWidth="1.300" /></svg>
      </AppSlot>

      <G w={12} h={8} s="#fff" sw={1.2}><path d="m1 6.500 5-5 5 5" /></G>
      <G w={16} h={12} s="#fff"><path d="M5.500 3.500h9v6h-9z" fill="#fff" /><path d="M4.500 2.500h11v8h-8M2 0v2M4 0v2M1 2.500h4v2a2 2 0 0 1-4 0zM3 7v3.500h2" /></G>
      <G w={16} h={14} s="#fff"><path d="M5 1.500h10.500v8H4.500V6M8 12.500h6M10.500 10v3M.500.500h4v4h-4zM2.500 5v7" /></G>
      <G w={16} h={13} s="#fff"><path d="M.500 4.500H3l3.500-3.500v11L3 8.500H.500zM8.500 4.500c1 1 1 3 0 4M10.500 2.500c2 2 2 6 0 8" /><path d="M12.500.800c3 3 3 8.500 0 11.400" opacity=".6" /></G>
      <Clock><Fit w={28}>02:59</Fit><Fit w={54}>17.03.2021</Fit></Clock>
      <G w={16} h={17} s="#fff" sw={1.2}><path d="M.700.700h14.600v12H10l-2 2.500-2-2.500H.700z" /></G>
      <svg width="1" height="39"><path d="M0 0h1v39H0z" fill="#555" /></svg>
    </TaskBar>
  );
}

export default function App() {
  return (
    <>
      <Global />
      <Window>
        <Title />
        <TabStrip />
        <RibbonPanel />
        <Document />
        <Status />
        <Tasks />
      </Window>
    </>
  );
}
